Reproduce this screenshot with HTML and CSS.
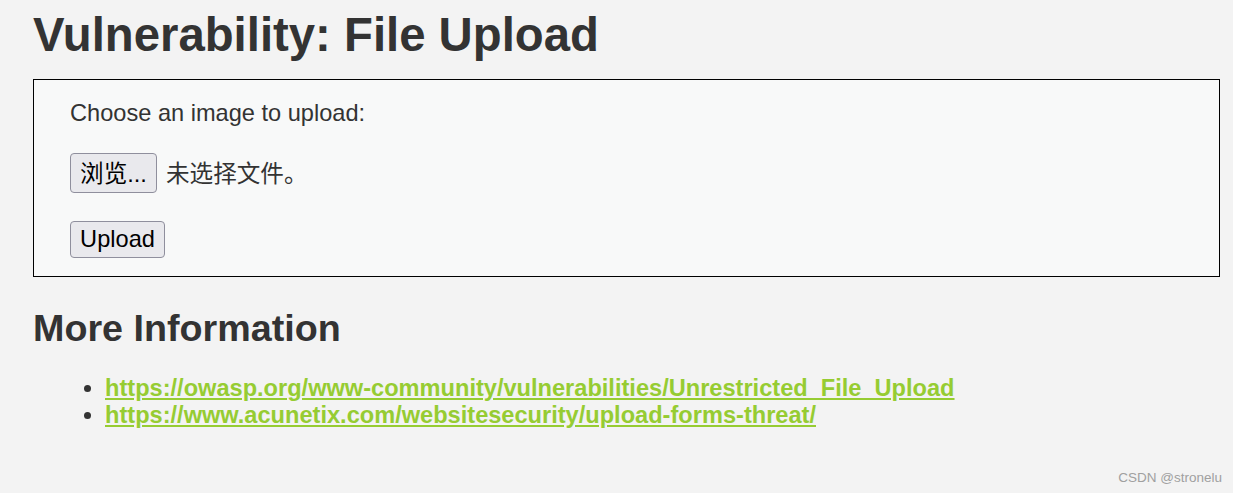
FILE: index.html
```html
<!DOCTYPE html>
<html lang="en">
  <head>
    <meta charset="UTF-8" />
    <meta name="viewport" content="width=device-width, initial-scale=1.0" />
    <title>Vulnerability: File Upload</title>
    <link rel="stylesheet" href="styles.css">
  </head>

  <body>
    <div class="main-body">
      <h1>Vulnerability: File Upload</h1>

      <div class="upload-box">
        <p>Choose an image to upload:</p>
        <div class="file-row">
          <button class="btn btn-browse" type="button">浏览...</button>
          <span class="file-name">未选择文件。</span>
        </div>
        <div>
          <button class="btn btn-upload" type="button">Upload</button>
        </div>
      </div>

      <h2>More Information</h2>
      <ul class="info-links">
        <li><a href="#">https://owasp.org/www-community/vulnerabilities/Unrestricted_File_Upload</a></li>
        <li><a href="#">https://www.acunetix.com/websitesecurity/upload-forms-threat/</a></li>
      </ul>
    </div>

    <div class="watermark">CSDN @stronelu</div>
  </body>
</html>
```

FILE: styles.css
```css
* {
  box-sizing: border-box;
  margin: 0;
  padding: 0;
}

body {
  font-family: 'Liberation Sans', 'Noto Sans CJK SC', sans-serif;
  font-size: 23.6px;
  background: #f3f3f3;
  color: #333;
  min-height: 100vh;
}

.main-body {
  padding: 8px 13px 0 33px;
}

h1 {
  font-size: 47.3px;
  font-weight: bold;
  line-height: 54px;
  margin-bottom: 17px;
}

.upload-box {
  background: #f8f9f9;
  border: 1px solid #000;
  padding: 18px 36px;
  display: flex;
  flex-direction: column;
  gap: 28px;
}

.upload-box p {
  line-height: 27px;
  padding-top: 2px;
  margin-bottom: -2px;
}

.file-row {
  display: flex;
  align-items: center;
  gap: 9px;
}

.btn {
  font-family: 'Liberation Sans', 'Noto Sans CJK SC', sans-serif;
  font-size: 23.6px;
  color: #000;
  background: #e9e9ed;
  border: 1px solid #8f8f9d;
  border-radius: 4px;
  line-height: 27px;
}

.btn-browse {
  height: 40px;
  width: 87px;
  padding: 2px 0 0;
}

.btn-upload {
  height: 37px;
  width: 95px;
  padding: 0;
}

.file-name {
  line-height: 27px;
  padding-top: 3px;
}

h2 {
  font-size: 37.7px;
  font-weight: bold;
  line-height: 42px;
  margin-top: 30px;
  margin-bottom: 26px;
}

.info-links {
  padding-left: 72px;
  line-height: 27px;
}

.info-links a {
  color: #96cc32;
  font-weight: bold;
  text-decoration: underline;
}

.watermark {
  position: absolute;
  right: 11px;
  bottom: 8px;
  font-size: 13.5px;
  color: #a0a0a0;
}
```
